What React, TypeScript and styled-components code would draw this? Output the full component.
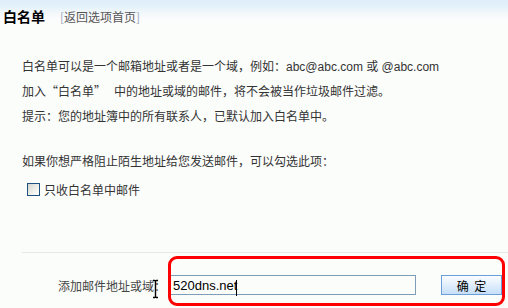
import React from 'react';
import styled, { createGlobalStyle } from 'styled-components';

const GlobalStyle = createGlobalStyle`
  html, body {
    margin: 0;
    padding: 0;
    background: #fbfdfb;
  }
  body {
    font-family: "Liberation Sans", "Noto Sans CJK SC", sans-serif;
    font-size: 12px;
    color: #333;
  }
`;

const Page = styled.div`
  width: 508px;
  height: 308px;
  overflow: hidden;
  background: #fbfdfb;
`;

const Header = styled.div`
  height: 32px;
  display: flex;
  align-items: center;
  gap: 15px;
  padding-left: 3px;
  background: linear-gradient(#deedf9 0, #e3f1fa 6px, #f2f8fb 13px, #fcfbfd 19px, #fbfdfb 24px);
`;

const Title = styled.h1`
  margin: 0;
  font-family: "Noto Sans CJK SC", sans-serif;
  font-size: 14px;
  font-weight: bold;
  color: #000;
`;

const BackLink = styled.a`
  font-family: "Noto Sans CJK SC", sans-serif;
  color: #555;
  text-decoration: none;
  cursor: pointer;
`;

const Bracket = styled.span`
  color: #9aa6b8;
`;

const Content = styled.div`
  padding-left: 22px;
`;

const Paragraph = styled.div<{ $top: number }>`
  margin-top: ${({ $top }) => $top}px;
  line-height: 23px;
  white-space: nowrap;
`;

const Cjk = styled.span`
  font-family: "Noto Sans CJK SC", sans-serif;
`;

// full-width quote cell, glyph pushed to the inner side like a CJK bitmap font
const Quote = styled.span<{ $open?: boolean; $width?: number }>`
  display: inline-block;
  width: ${({ $width }) => $width ?? 12}px;
  text-align: ${({ $open }) => ($open ? 'right' : 'left')};
`;

const CheckRow = styled.label`
  margin-top: 4px;
  height: 23px;
  display: flex;
  align-items: center;
  gap: 4px;
  padding-left: 5px;
  font-family: "Noto Sans CJK SC", sans-serif;
  cursor: pointer;
`;

const CheckBox = styled.input`
  appearance: none;
  margin: 0;
  width: 13px;
  height: 13px;
  box-sizing: border-box;
  border: 1px solid #1c5180;
  background: linear-gradient(135deg, #d6d6d0 0%, #efefea 55%, #ffffff 100%);
`;

const FormSection = styled.div`
  position: relative;
  margin-top: 51px;
  border-top: 1px solid #e8e8e8;
  padding-top: 22px;
  height: 40px;
`;

const FormRow = styled.div`
  display: flex;
  align-items: center;
  height: 20px;
`;

const FieldLabel = styled.span`
  width: 144px;
  text-align: right;
  color: #444;
  font-family: "Noto Sans CJK SC", sans-serif;
`;

const TextInput = styled.input`
  margin-left: 4px;
  width: 246px;
  height: 20px;
  box-sizing: border-box;
  border: 1px solid #7f9db9;
  background: #fbfdfb;
  padding: 0 2px;
  font-family: "Liberation Sans", sans-serif;
  font-size: 13px;
  color: #000;
  outline: none;
`;

const SubmitButton = styled.button`
  margin-left: 25px;
  width: 61px;
  height: 20px;
  box-sizing: border-box;
  border: 1px solid #6a9fd9;
  background: linear-gradient(#fbfdff, #c6dff8);
  font-family: "Liberation Sans", "Noto Sans CJK SC", sans-serif;
  font-size: 12px;
  word-spacing: 2px;
  color: #000;
  padding: 0;
  cursor: pointer;
`;

const Highlight = styled.div`
  position: absolute;
  left: 146px;
  top: 3px;
  width: 337px;
  height: 50px;
  box-sizing: border-box;
  border: 3px solid #ff0000;
  border-radius: 9px;
  pointer-events: none;
`;

const Caret = styled.span`
  position: absolute;
  left: 214px;
  top: 27px;
  width: 1px;
  height: 16px;
  background: #000;
`;

const Cursor = styled.svg`
  position: absolute;
  left: 130px;
  top: 26px;
`;

export default function App() {
  return (
    <Page>
      <GlobalStyle />
      <Header>
        <Title>白名单</Title>
        <BackLink>
          <Bracket>[</Bracket>返回选项首页<Bracket>]</Bracket>
        </BackLink>
      </Header>
      <Content>
        <Paragraph $top={22}>
          <Cjk>白名单可以是一个邮箱地址或者是一个域，例如：</Cjk>abc@abc.com <Cjk>或</Cjk>  @abc.com
          <br />
          <Cjk>
            加入<Quote $open>“</Quote>白名单<Quote $width={20}>”</Quote>中的地址或域的邮件，将不会被当作垃圾邮件过滤。
          </Cjk>
          <br />
          <Cjk>提示：您的地址簿中的所有联系人，已默认加入白名单中。</Cjk>
        </Paragraph>
        <Paragraph $top={20}>
          <Cjk>如果你想严格阻止陌生地址给您发送邮件，可以勾选此项：</Cjk>
        </Paragraph>
        <CheckRow>
          <CheckBox type="checkbox" />
          只收白名单中邮件
        </CheckRow>
        <FormSection>
          <FormRow>
            <FieldLabel>添加邮件地址或域：</FieldLabel>
            <TextInput type="text" defaultValue="520dns.net" />
            <SubmitButton type="button">确 定</SubmitButton>
          </FormRow>
          <Caret />
          <Highlight />
          <Cursor width="7" height="20" viewBox="0 0 7 20">
            <path d="M1 1.5h2M4 1.5h2M3.5 1v18M1 18.5h2M4 18.5h2" stroke="#000" strokeWidth="1.4" fill="none" />
          </Cursor>
        </FormSection>
      </Content>
    </Page>
  );
}
